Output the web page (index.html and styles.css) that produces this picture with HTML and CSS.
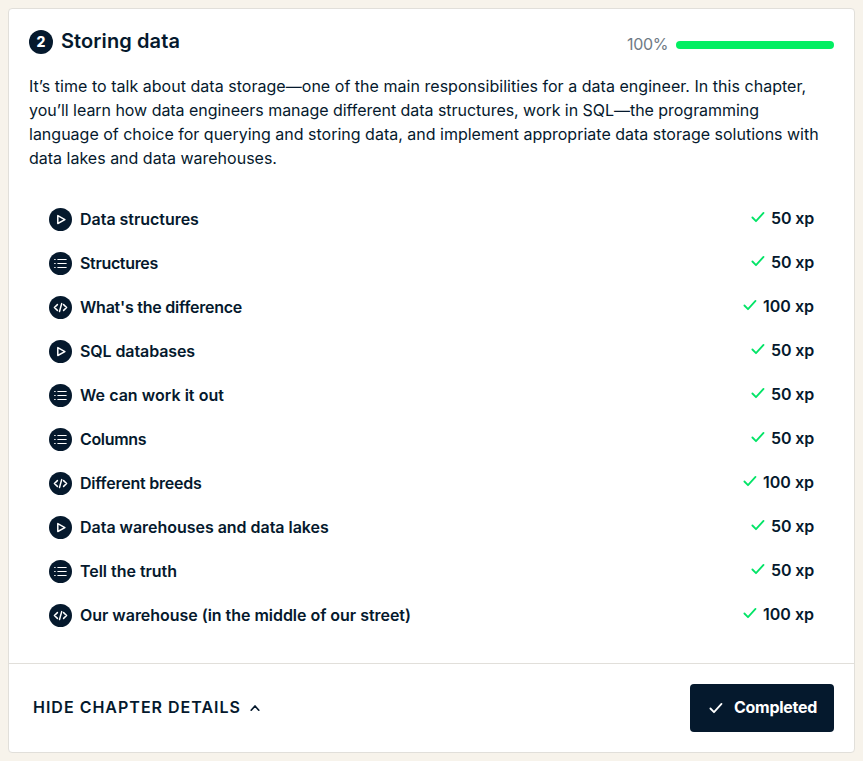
FILE: index.html
```
<!DOCTYPE html>
<html lang="en">
<head>
<meta charset="utf-8">
<title>Storing data</title>
<link rel="stylesheet" href="styles.css">
</head>
<body>
<svg width="0" height="0" class="sprite" aria-hidden="true">
  <symbol id="video" viewBox="0 0 23 23"><circle cx="11.5" cy="11.5" r="11.5" fill="#05192d"/><path d="M8.8 7.6v7.9l7.1-3.95z" fill="none" stroke="#fff" stroke-width="1.5" stroke-linejoin="round"/></symbol>
  <symbol id="list" viewBox="0 0 23 23"><circle cx="11.5" cy="11.5" r="11.5" fill="#05192d"/><path d="M5.2 7.5h1.4M5.2 11.5h1.4M5.2 15.5h1.4M8.4 7.5h9.2M8.4 11.5h9.2M8.4 15.5h9.2" stroke="#fff" stroke-width="1.2"/></symbol>
  <symbol id="code" viewBox="0 0 23 23"><circle cx="11.5" cy="11.5" r="11.5" fill="#05192d"/><path d="M8.4 8.6l-3 2.9 3 2.9M14.6 8.6l3 2.9-3 2.9M12.7 7.6l-2.2 7.9" fill="none" stroke="#fff" stroke-width="1.5" stroke-linecap="round" stroke-linejoin="round"/></symbol>
  <symbol id="check" viewBox="0 0 14 12"><path d="M1.4 6.5l3.6 3.7 7.5-8.3" fill="none" stroke="currentColor" stroke-width="1.8" stroke-linecap="round" stroke-linejoin="round"/></symbol>
</svg>
<main class="card">
  <section class="body">
    <header class="head">
      <span class="number">2</span>
      <h2 class="title">Storing data</h2>
      <span class="percent">100%</span>
      <span class="bar"></span>
    </header>
    <p class="text"><span class="wide">It’s time to talk about data storage—one of the main responsibilities for a data engineer. In this chapter,</span><br><span class="snug">you’ll learn how data engineers manage different data structures, work in SQL—the programming</span><br>language of choice for querying and storing data, and implement appropriate data storage solutions with<br>data lakes and data warehouses.</p>
    <ul class="list">
      <li class="row"><svg class="icon"><use href="#video"/></svg><span class="name">Data structures</span><svg class="check"><use href="#check"/></svg><span class="xp fifty">50 xp</span></li>
      <li class="row"><svg class="icon"><use href="#list"/></svg><span class="name tight3">Structures</span><svg class="check"><use href="#check"/></svg><span class="xp fifty">50 xp</span></li>
      <li class="row"><svg class="icon"><use href="#code"/></svg><span class="name tight2">What's the difference</span><svg class="check"><use href="#check"/></svg><span class="xp">100 xp</span></li>
      <li class="row"><svg class="icon"><use href="#video"/></svg><span class="name tight1">SQL databases</span><svg class="check"><use href="#check"/></svg><span class="xp fifty">50 xp</span></li>
      <li class="row"><svg class="icon"><use href="#list"/></svg><span class="name loose">We can work it out</span><svg class="check"><use href="#check"/></svg><span class="xp fifty">50 xp</span></li>
      <li class="row"><svg class="icon"><use href="#list"/></svg><span class="name tight3">Columns</span><svg class="check"><use href="#check"/></svg><span class="xp fifty">50 xp</span></li>
      <li class="row"><svg class="icon"><use href="#code"/></svg><span class="name tight2">Different breeds</span><svg class="check"><use href="#check"/></svg><span class="xp">100 xp</span></li>
      <li class="row"><svg class="icon"><use href="#video"/></svg><span class="name">Data warehouses and data lakes</span><svg class="check"><use href="#check"/></svg><span class="xp fifty">50 xp</span></li>
      <li class="row"><svg class="icon"><use href="#list"/></svg><span class="name">Tell the truth</span><svg class="check"><use href="#check"/></svg><span class="xp fifty">50 xp</span></li>
      <li class="row"><svg class="icon"><use href="#code"/></svg><span class="name">Our warehouse (in the middle of our street)</span><svg class="check"><use href="#check"/></svg><span class="xp">100 xp</span></li>
    </ul>
  </section>
  <footer class="foot">
    <a class="toggle"><span>HIDE CHAPTER DETAILS</span><svg class="chevron" viewBox="0 0 10 8"><path d="M1.2 6.2L5 2l3.8 4.2" fill="none" stroke="currentColor" stroke-width="1.7" stroke-linecap="round" stroke-linejoin="round"/></svg></a>
    <a class="button"><svg class="check"><use href="#check"/></svg><span class="label">Completed</span></a>
  </footer>
</main>
</body>
</html>
```
FILE: styles.css
```
* { box-sizing: border-box; }
body {
  margin: 0;
  padding: 8px;
  background: #f7f3eb;
  color: #05192d;
  font: 400 16px/24px Inter, "Liberation Sans", sans-serif;
}
.sprite { display: block; height: 0; }
.card {
  display: flex;
  flex-direction: column;
  width: 847px;
  height: 745px;
  background: #fff;
  border: 1px solid #e1dfda;
  border-radius: 4px;
}
.body { flex: 1; padding: 20px; }
.head { display: flex; align-items: center; height: 26px; }
.number {
  width: 24px;
  height: 24px;
  border-radius: 50%;
  background: #05192d;
  color: #fff;
  font-size: 14px;
  font-weight: 800;
  text-align: center;
}
.title { margin: 0 auto 2px 8px; font-size: 20px; font-weight: 600; letter-spacing: .1px; }
.percent { margin-top: 3px; color: #6f7a85; letter-spacing: -.35px; }
.bar { width: 158px; height: 8px; margin: 6px 0 0 8px; border-radius: 4px; background: #03ef62; }
.text { margin: 19px 0 0; white-space: nowrap; }
.wide { letter-spacing: .03px; }
.snug { letter-spacing: -.04px; }
.list { margin: 27px 0 0; padding: 0 20px; list-style: none; }
.row { display: flex; align-items: center; height: 44px; font-weight: 600; }
.icon { width: 23px; height: 23px; margin-right: 8px; }
.name { margin-right: auto; letter-spacing: -.03px; }
.tight1 { letter-spacing: -.1px; }
.tight2 { letter-spacing: -.23px; }
.tight3 { letter-spacing: -.33px; }
.loose { letter-spacing: .04px; }
.check { width: 14px; height: 12px; }
.row .check { margin: 0 6px 4px 0; color: #03e467; }
.xp { margin-bottom: 2px; }
.fifty { letter-spacing: -.14px; }
.foot {
  display: flex;
  align-items: center;
  justify-content: space-between;
  height: 89px;
  padding: 0 20px 0 24px;
  border-top: 1px solid #e1dfda;
}
.toggle { display: flex; align-items: center; font-weight: 600; letter-spacing: 1px; }
.toggle span, .label { margin-bottom: 2px; }
.chevron { width: 10px; height: 8px; margin-left: 9px; }
.button {
  display: flex;
  align-items: center;
  width: 144px;
  height: 48px;
  padding-left: 19px;
  border-radius: 4px;
  background: #05192d;
  color: #fff;
  font-weight: 700;
  letter-spacing: -.28px;
}
.button .check { margin-right: 11px; }
```
